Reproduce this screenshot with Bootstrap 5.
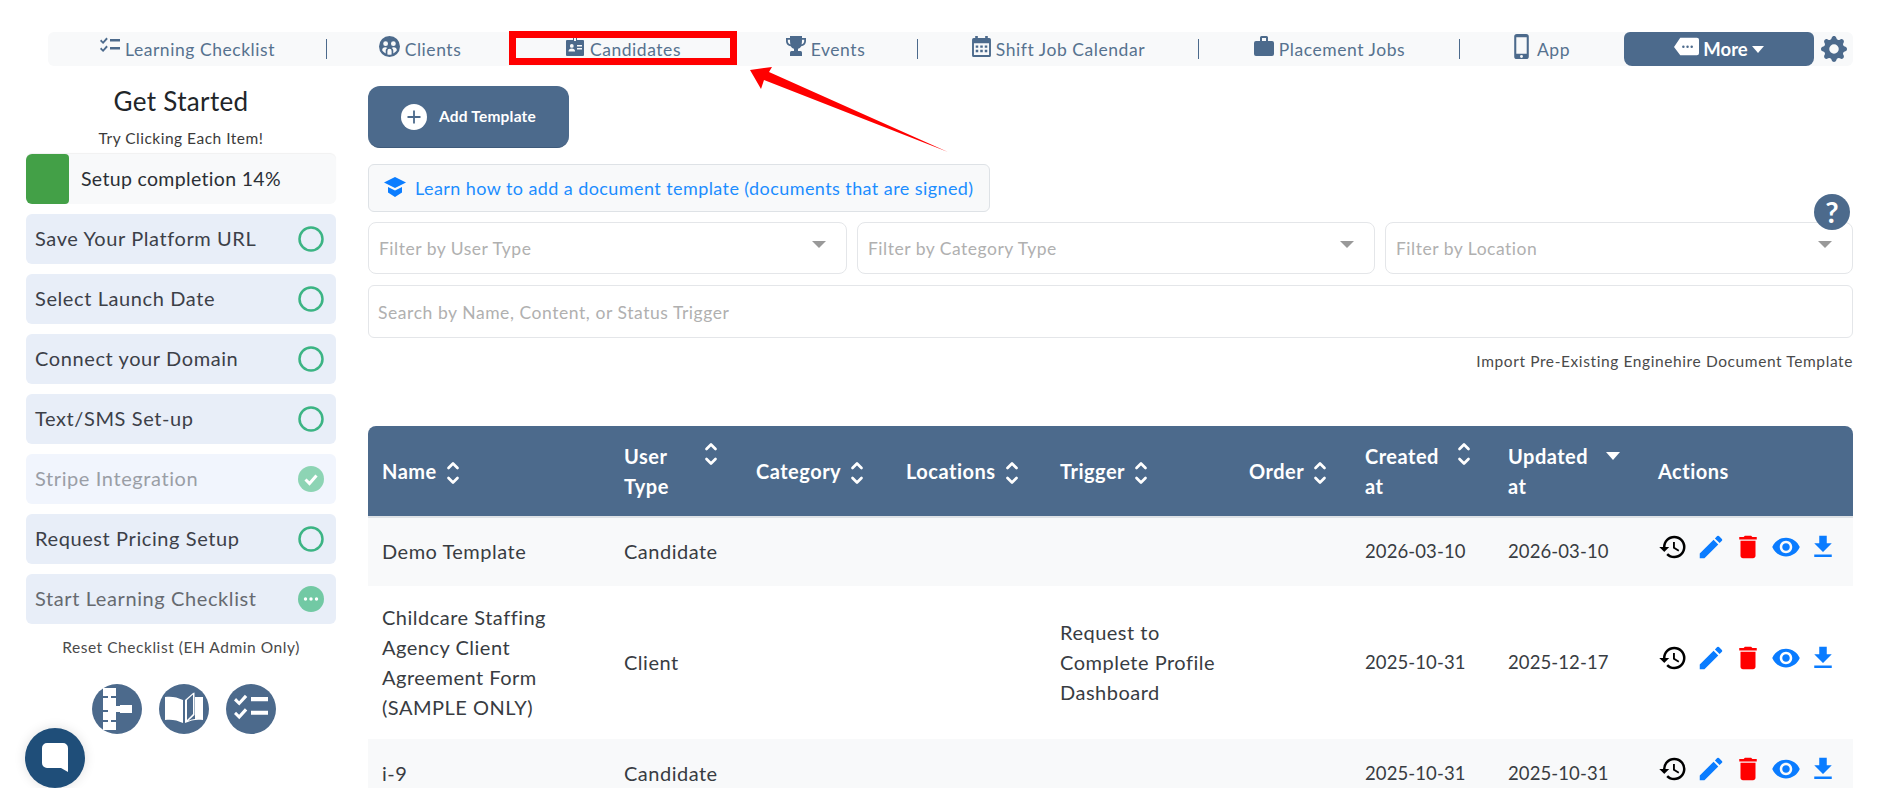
<!DOCTYPE html>
<html lang="en">
<head>
<meta charset="utf-8">
<title>Templates</title>
<link href="https://cdn.jsdelivr.net/npm/bootstrap@5.3.0/dist/css/bootstrap.min.css" rel="stylesheet">
<style>
html,body{height:788px;overflow:hidden;background:#fff}
body{font-family:"Lato","Noto Sans",sans-serif;color:#212529;position:relative;padding-top:32px}
.topnav{margin:0 46px 0 48px;height:34px;background:#f8f9fa;border-radius:6px}
.navcell{height:34px;color:#56728f;font-size:17.5px;letter-spacing:.55px;text-decoration:none;position:relative;white-space:nowrap;padding-top:2px}
.navcell svg{fill:#4c6a8c;margin-right:5px;transform:translateY(-4px)}
.sep::after{content:"";position:absolute;right:0;top:7px;height:20px;border-right:1.5px solid #4c6a8c}
.w1{width:279px}.w2{width:186px}.w3{width:220px}.w4{width:185px}.w5{width:281px}.w6{width:261px}.w7{width:164px}
.morebtn{width:190px;height:34px;background:#4c6a8c;color:#fff;border-radius:6px 6px 8px 8px;font-weight:700;font-size:18.5px;padding:1px 0 0;border:0}
.morebtn:hover{background:#4c6a8c;color:#fff}
.morebtn svg{fill:#fff}
.morebtn svg:first-child{transform:translateY(-3px)}
.gearwrap{width:39px}
.gearwrap svg{fill:#4c6a8c}
.layout{margin-top:20px;padding-left:26px}
.sidecol{width:310px;flex:none}
.sidetitle{font-size:26px;line-height:30px;font-weight:400;margin:0;text-align:center;letter-spacing:.35px}
.sidesub{font-size:15.5px;line-height:22px;margin:11px 0 5px;text-align:center;color:#3a3a3a;letter-spacing:.5px}
.progbox{height:50px;background:#f8f9fa;border-radius:6px;font-size:19.5px;box-shadow:0 -1px 1px rgba(0,0,0,.06);overflow:hidden;letter-spacing:.33px;color:#2b2f35}
.progfill{width:43px;height:50px;background:#43a047;border-radius:4px;margin-right:12px}
.stepitem{height:50px;margin-top:10px;background:#e8eef8;border-radius:6px;padding:0 12px 2px 9px;font-size:20px;color:#3c4048;letter-spacing:.6px}
.stepitem svg{transform:translateY(1px)}
.stepitem.faded{background:#f1f5fd;color:#9a9ea6}
.stepitem.mute{color:#666a70}
.resettext{font-size:15.5px;line-height:22px;text-align:center;margin:12px 0 0;color:#4a4a4a;letter-spacing:.55px}
.roundrow{margin-top:26px;gap:17px;padding-left:5px}
.roundicon{width:50px;height:50px;border-radius:50%;background:#4c6a8c}
.roundicon svg{fill:#fff}
.maincol{width:1485px;margin-left:32px;flex:none;position:relative}
.addbtn{width:201px;height:62px;background:#4c6a8c;color:#fff;border-radius:12px;font-weight:700;font-size:15.5px;padding:0;border:0;border-bottom:1px solid #3e5a7a;letter-spacing:.2px}
.addbtn:hover{background:#4c6a8c;color:#fff}
.addbtn svg{margin-right:12px}
.learnbox{width:622px;height:48px;margin-top:16px;background:#f8f9fa;border:1px solid #dee2e6;border-radius:6px;color:#1c8dff;font-size:18px;letter-spacing:.42px;text-decoration:none;padding:1px 0 0 15px}
.learnbox svg{fill:#0b7dff;margin-right:9px;transform:translateY(-2px)}
.filterrow{margin-top:10px;gap:10px}
.filterbox{height:52px;border:1px solid #e4e6e9;border-radius:8px;padding:2px 20px 0 10px;color:#b0b0b0;font-size:17.5px;letter-spacing:.5px}
.fa{width:479px}.fb{width:518px}.fc{width:468px}
.caretmark{width:0;height:0;border-left:7px solid transparent;border-right:7px solid transparent;border-top:7px solid #999;transform:translateY(-5px)}
.searchbox{display:block;width:100%;height:53px;margin-top:11px;border:1px solid #e4e6e9;border-radius:6px;padding:2px 9px 0;font-size:17.5px;letter-spacing:.56px;color:#333}
.searchbox::placeholder{color:#b0b0b0}
.importline{font-size:15.5px;line-height:22px;margin-top:12px;text-align:right;color:#4a4a4a;letter-spacing:.6px}
.helpdot{position:absolute;right:3px;top:108px;width:36px;height:36px;border-radius:50%;background:#4c6a8c;color:#fff;font-weight:700;font-size:29px;line-height:36px;text-align:center}
.tplt{margin-top:54px;table-layout:fixed;width:1485px;border-collapse:separate;border-spacing:0;font-size:20px;line-height:30px;letter-spacing:.5px;margin-bottom:0}
.tplt th{background:#4c6a8c;color:#fff;font-weight:700;height:92px;padding:0 0 0 14px;vertical-align:middle;border-bottom:2px solid #dee2e6;letter-spacing:.5px}
.tplt th:first-child{border-top-left-radius:8px}
.tplt th:last-child{border-top-right-radius:8px}
.tplt td{padding:0 0 2px 14px;vertical-align:middle;border:0;color:#383c42}
.tplt tr.ev td{background:#f8f9fa}
.tplt tr.od td{background:#fff}
.tplt td.datecell{font-size:18.5px;letter-spacing:.1px}
.r1{height:68px}.r2{height:153px}.r3{height:69px}
.sorter{fill:none;stroke:#fff;stroke-width:2.7;stroke-linecap:round;stroke-linejoin:round;margin-left:9px;vertical-align:-7px}
.sorter.gapuser{margin-right:24px}
.sorter.gapdate{margin-left:18px}
.sortcaret{margin:11px 0 0 18px}
.actset{gap:7.5px;padding-bottom:8px}
.redrect{position:absolute;left:509px;top:31px;width:228px;height:34px;border:7px solid #f00;pointer-events:none}
.arrowmark{position:absolute;left:740px;top:60px}
.chatbubble{position:absolute;left:25px;top:728px;width:60px;height:60px;border-radius:50%;background:#1f4e79;box-shadow:0 0 12px rgba(0,0,0,.12)}
</style>
</head>
<body>
<svg width="0" height="0" class="position-absolute">
<defs>
<symbol id="i-hist" viewBox="0 0 24 24"><path d="M13 3a9 9 0 0 0-9 9H1l3.89 3.89.07.14L9 12H6c0-3.87 3.13-7 7-7s7 3.13 7 7-3.13 7-7 7c-1.93 0-3.68-.79-4.94-2.06l-1.42 1.42A8.954 8.954 0 0 0 13 21a9 9 0 0 0 0-18zm-1 5v5l4.28 2.54.72-1.21-3.5-2.08V8H12z"/></symbol>
<symbol id="i-edit" viewBox="0 0 24 24"><path d="M3 17.25V21h3.75L17.81 9.94l-3.75-3.75L3 17.25zM20.71 7.04a1 1 0 0 0 0-1.41l-2.34-2.34a1 1 0 0 0-1.41 0l-1.83 1.83 3.75 3.75 1.83-1.83z"/></symbol>
<symbol id="i-del" viewBox="0 0 24 24"><path d="M6 19c0 1.1.9 2 2 2h8c1.1 0 2-.9 2-2V7H6v12zM19 4h-3.5l-1-1h-5l-1 1H5v2h14V4z"/></symbol>
<symbol id="i-eye" viewBox="0 0 24 24"><path d="M12 4.5C7 4.5 2.73 7.61 1 12c1.73 4.39 6 7.5 11 7.5s9.27-3.11 11-7.5c-1.73-4.39-6-7.5-11-7.5zM12 17c-2.76 0-5-2.24-5-5s2.24-5 5-5 5 2.24 5 5-2.24 5-5 5zm0-8c-1.66 0-3 1.34-3 3s1.34 3 3 3 3-1.34 3-3-1.34-3-3-3z"/></symbol>
<symbol id="i-down" viewBox="0 0 24 24"><path d="M19 9h-4V3H9v6H5l7 7 7-7zM5 18v2h14v-2H5z"/></symbol>
<symbol id="i-sort" viewBox="0 0 14 26"><path d="M2.500 8 7 3.500 11.500 8M2.500 18 7 22.500 11.500 18"/></symbol>
<symbol id="i-list" viewBox="0 0 20 20"><path d="M1.200 3.600 3 5.400 6.400 1.600 7.800 2.900 3.100 8 0 5zM1.200 11.600 3 13.400 6.400 9.600 7.800 10.900 3.100 16 0 13zM10 3h10v2.400H10zM10 11h10v2.400H10z"/></symbol>
</defs>
</svg>

<nav class="topnav d-flex align-items-center">
<a class="navcell w1 sep d-flex align-items-center justify-content-center" href="#"><svg width="20" height="20"><use href="#i-list"/></svg>Learning Checklist</a>
<a class="navcell w2 d-flex align-items-center justify-content-center" href="#"><svg width="21" height="21" viewBox="0 0 20 20"><path fill-rule="evenodd" d="M10 0a10 10 0 1 1 0 20 10 10 0 0 1 0-20zM6.300 5a2.300 2.300 0 1 0 0 4.600 2.300 2.300 0 0 0 0-4.600zm7.400 0a2.300 2.300 0 1 0 0 4.600 2.300 2.300 0 0 0 0-4.600zM6 10.800c-1.800 0-3 1.200-3 2.800.8 1.300 2 2.300 3.400 3V14c0-1 .6-2 1.600-2.500-.5-.5-1.200-.7-2-.7zm8 0c-.8 0-1.500.2-2 .7 1 .5 1.600 1.500 1.600 2.500v2.600c1.400-.7 2.600-1.700 3.400-3 0-1.600-1.200-2.800-3-2.800zm-4 1.400a2 2 0 0 0-2 2v3.400a9 9 0 0 0 4 0v-3.400a2 2 0 0 0-2-2z"/></svg>Clients</a>
<a class="navcell w3 d-flex align-items-center justify-content-center" href="#"><svg width="20" height="22" viewBox="0 0 20 20"><path fill-rule="evenodd" d="M8 0h4v4h6a1 1 0 0 1 1 1v14a1 1 0 0 1-1 1H2a1 1 0 0 1-1-1V5a1 1 0 0 1 1-1h6zm1 1v4h2V1zM6.800 8a1.900 1.900 0 1 0 0 3.800 1.900 1.900 0 0 0 0-3.800zM3.500 15.500h6.600c0-1.700-1.400-3-3.300-3s-3.300 1.300-3.300 3zM12 9v1.400h5V9zm0 3v1.400h5V12z"/></svg>Candidates</a>
<a class="navcell w4 sep d-flex align-items-center justify-content-center" href="#"><svg width="20" height="20" viewBox="0 0 20 20"><path fill-rule="evenodd" d="M4 0h12v2h4v3c0 3-2.300 5-4.800 5.300-.8 1.300-2 2.200-3.200 2.500V15h2.500c1 0 1.500.8 1.500 2v3H4v-3c0-1.200.5-2 1.500-2H8v-2.200c-1.200-.3-2.400-1.200-3.200-2.500C2.300 10 0 8 0 5V2h4zM1.800 3.800V5c0 1.800 1.200 3 2.600 3.500C4.100 7.200 4 5.500 4 3.800zm14.200 0c0 1.700-.1 3.400-.4 4.700C17 8 18.200 6.800 18.200 5V3.800z"/></svg>Events</a>
<a class="navcell w5 sep d-flex align-items-center justify-content-center" href="#"><svg width="19" height="21" viewBox="0 0 18 20"><path fill-rule="evenodd" d="M3 0h2.500v2h7V0H15v2h1.500A1.500 1.500 0 0 1 18 3.500v15a1.500 1.500 0 0 1-1.500 1.500h-15A1.500 1.500 0 0 1 0 18.500v-15A1.500 1.500 0 0 1 1.500 2H3zM1.800 7v11.200h14.400V7zM3.500 9h2.400v2.200H3.500zm4.300 0h2.400v2.200H7.800zm4.300 0h2.400v2.200h-2.400zM3.500 13.200h2.400v2.200H3.500zm4.300 0h2.400v2.200H7.800zm4.300 0h2.400v2.200h-2.400z"/></svg>Shift Job Calendar</a>
<a class="navcell w6 sep d-flex align-items-center justify-content-center" href="#"><svg width="20" height="20" viewBox="0 0 20 20"><path fill-rule="evenodd" d="M6 1.500A1.500 1.500 0 0 1 7.500 0h5A1.500 1.500 0 0 1 14 1.500V5h4a2 2 0 0 1 2 2v11a2 2 0 0 1-2 2H2a2 2 0 0 1-2-2V7a2 2 0 0 1 2-2h4zM8 2v3h4V2z"/></svg>Placement Jobs</a>
<a class="navcell w7 d-flex align-items-center justify-content-center" href="#"><svg width="15" height="25" viewBox="0 0 14 24" class="me-2"><path fill-rule="evenodd" d="M2.500 0h9A2.500 2.500 0 0 1 14 2.500v19a2.500 2.500 0 0 1-2.500 2.500h-9A2.500 2.500 0 0 1 0 21.500v-19A2.500 2.500 0 0 1 2.500 0zM2 3v16h10V3zm5 17.200a1.400 1.400 0 1 0 0 2.800 1.400 1.400 0 0 0 0-2.800z"/></svg>App</a>
<button type="button" class="btn morebtn d-flex align-items-center justify-content-center"><svg width="25" height="22" viewBox="0 0 24 20" class="me-1"><path fill-rule="evenodd" d="M6 1h16a2 2 0 0 1 2 2v13a2 2 0 0 1-2 2H6l-6-8zM9 8.600a1.200 1.200 0 1 0 0 2.400 1.200 1.200 0 0 0 0-2.400zm4 0a1.200 1.200 0 1 0 0 2.400 1.200 1.200 0 0 0 0-2.400zm4 0a1.200 1.200 0 1 0 0 2.400 1.200 1.200 0 0 0 0-2.400z"/></svg>More<svg width="12" height="7" viewBox="0 0 12 7" class="ms-1"><path d="M0 0h12L6 7z"/></svg></button>
<div class="gearwrap d-flex justify-content-center"><svg width="26" height="26" viewBox="0 0 16 16"><path d="M9.405 1.050c-.413-1.400-2.397-1.400-2.810 0l-.1.340a1.464 1.464 0 0 1-2.105.872l-.31-.17c-1.283-.698-2.686.705-1.987 1.987l.169.311c.446.820.023 1.841-.872 2.105l-.34.1c-1.400.413-1.400 2.397 0 2.810l.34.1a1.464 1.464 0 0 1 .872 2.105l-.17.31c-.698 1.283.705 2.686 1.987 1.987l.311-.169a1.464 1.464 0 0 1 2.105.872l.1.340c.413 1.400 2.397 1.400 2.810 0l.1-.340a1.464 1.464 0 0 1 2.105-.872l.31.170c1.283.698 2.686-.705 1.987-1.987l-.169-.311a1.464 1.464 0 0 1 .872-2.105l.340-.1c1.400-.413 1.400-2.397 0-2.810l-.340-.1a1.464 1.464 0 0 1-.872-2.105l.170-.31c.698-1.283-.705-2.686-1.987-1.987l-.311.169a1.464 1.464 0 0 1-2.105-.872l-.1-.34zM8 10.930a2.929 2.929 0 1 1 0-5.860 2.929 2.929 0 0 1 0 5.858z"/></svg></div>
</nav>

<div class="layout d-flex align-items-start">
<aside class="sidecol">
<h1 class="sidetitle">Get Started</h1>
<p class="sidesub">Try Clicking Each Item!</p>
<div class="progbox d-flex align-items-center"><div class="progfill"></div>Setup completion 14%</div>
<div class="stepitem d-flex align-items-center justify-content-between">Save Your Platform URL<svg width="26" height="26" viewBox="0 0 26 26"><circle cx="13" cy="13" r="11.500" fill="none" stroke="#3cb484" stroke-width="2.500"/></svg></div>
<div class="stepitem d-flex align-items-center justify-content-between">Select Launch Date<svg width="26" height="26" viewBox="0 0 26 26"><circle cx="13" cy="13" r="11.500" fill="none" stroke="#3cb484" stroke-width="2.500"/></svg></div>
<div class="stepitem d-flex align-items-center justify-content-between">Connect your Domain<svg width="26" height="26" viewBox="0 0 26 26"><circle cx="13" cy="13" r="11.500" fill="none" stroke="#3cb484" stroke-width="2.500"/></svg></div>
<div class="stepitem d-flex align-items-center justify-content-between">Text/SMS Set-up<svg width="26" height="26" viewBox="0 0 26 26"><circle cx="13" cy="13" r="11.500" fill="none" stroke="#3cb484" stroke-width="2.500"/></svg></div>
<div class="stepitem faded d-flex align-items-center justify-content-between">Stripe Integration<svg width="26" height="26" viewBox="0 0 26 26"><circle cx="13" cy="13" r="13" fill="#8dd4b4"/><path d="M7.500 13.500 11.500 17.500 18.500 9.500" fill="none" stroke="#fff" stroke-width="3"/></svg></div>
<div class="stepitem d-flex align-items-center justify-content-between">Request Pricing Setup<svg width="26" height="26" viewBox="0 0 26 26"><circle cx="13" cy="13" r="11.500" fill="none" stroke="#3cb484" stroke-width="2.500"/></svg></div>
<div class="stepitem mute d-flex align-items-center justify-content-between">Start Learning Checklist<svg width="26" height="26" viewBox="0 0 26 26"><circle cx="13" cy="13" r="13" fill="#72c9a4"/><circle cx="7.500" cy="13" r="1.700" fill="#fff"/><circle cx="13" cy="13" r="1.700" fill="#fff"/><circle cx="18.500" cy="13" r="1.700" fill="#fff"/></svg></div>
<p class="resettext">Reset Checklist (EH Admin Only)</p>
<div class="roundrow d-flex justify-content-center">
<div class="roundicon d-flex align-items-center justify-content-center"><svg width="30" height="42" viewBox="0 0 30 42"><path d="M0 0h13v8H8v2h5v8h4v-1h12v8H17v-1h-4v8H8v2h5v8H0v-8h5v-2H0v-8h5v-2H0V10h5V8H0z" transform="translate(1 0)"/></svg></div>
<div class="roundicon d-flex align-items-center justify-content-center"><svg width="38" height="38" viewBox="0 0 38 38"><path d="M0 7c6-1 12 0 18 3v23c-6-3-12-4-18-3zM20 10l8-7v1.500L22 10v20l6-6V3l1.500-.5V25L22 32l-2 1zM30 7l8 0v23c-6-1-12 0-18 3l1-1c3-2 7-3 9-3z"/></svg></div>
<div class="roundicon d-flex align-items-center justify-content-center"><svg width="34" height="34" viewBox="0 0 20 20"><use href="#i-list"/></svg></div>
</div>
</aside>

<main class="maincol">
<button type="button" class="btn addbtn d-flex align-items-center justify-content-center"><svg width="26" height="26" viewBox="0 0 26 26"><circle cx="13" cy="13" r="13" fill="#fff"/><path d="M13 6.500v13M6.500 13h13" stroke="#4c6a8c" stroke-width="1.800" fill="none"/></svg>Add Template</button>
<a href="#" class="learnbox d-flex align-items-center"><svg width="22" height="20" viewBox="0 0 22 20"><path fill-rule="evenodd" d="M11 0 22 5.500 11 11 0 5.500z"/><path d="M4 10l7 3.500 7-3.500v5.500L11 20l-7-4.500z"/></svg>Learn how to add a document template (documents that are signed)</a>
<div class="filterrow d-flex">
<div class="filterbox fa d-flex align-items-center justify-content-between">Filter by User Type<span class="caretmark"></span></div>
<div class="filterbox fb d-flex align-items-center justify-content-between">Filter by Category Type<span class="caretmark"></span></div>
<div class="filterbox fc d-flex align-items-center justify-content-between">Filter by Location<span class="caretmark"></span></div>
</div>
<input class="searchbox" type="text" placeholder="Search by Name, Content, or Status Trigger">
<div class="importline">Import Pre-Existing Enginehire Document Template</div>
<div class="helpdot">?</div>
<table class="table tplt">
<colgroup><col style="width:242px"><col style="width:132px"><col style="width:150px"><col style="width:154px"><col style="width:189px"><col style="width:116px"><col style="width:143px"><col style="width:150px"><col style="width:209px"></colgroup>
<thead><tr>
<th>Name<svg class="sorter" width="14" height="26"><use href="#i-sort"/></svg></th>
<th><div class="d-flex align-items-start"><span>User<br>Type</span><svg class="sorter gapuser ms-auto" width="14" height="26"><use href="#i-sort"/></svg></div></th>
<th>Category<svg class="sorter" width="14" height="26"><use href="#i-sort"/></svg></th>
<th>Locations<svg class="sorter" width="14" height="26"><use href="#i-sort"/></svg></th>
<th>Trigger<svg class="sorter" width="14" height="26"><use href="#i-sort"/></svg></th>
<th>Order<svg class="sorter" width="14" height="26"><use href="#i-sort"/></svg></th>
<th><div class="d-flex align-items-start"><span>Created<br>at</span><svg class="sorter gapdate" width="14" height="26"><use href="#i-sort"/></svg></div></th>
<th><div class="d-flex align-items-start"><span>Updated<br>at</span><svg class="sortcaret" width="14" height="8" viewBox="0 0 14 8" fill="#fff"><path d="M0 0h14L7 8z"/></svg></div></th>
<th>Actions</th>
</tr></thead>
<tbody>
<tr class="ev r1"><td>Demo Template</td><td>Candidate</td><td></td><td></td><td></td><td></td><td class="datecell">2026-03-10</td><td class="datecell">2026-03-10</td>
<td><div class="actset d-flex"><svg width="30" height="30" fill="#000"><use href="#i-hist"/></svg><svg width="30" height="30" fill="#0a7cff"><use href="#i-edit"/></svg><svg width="30" height="30" fill="#f00"><use href="#i-del"/></svg><svg width="30" height="30" fill="#0a7cff"><use href="#i-eye"/></svg><svg width="30" height="30" fill="#0a7cff"><use href="#i-down"/></svg></div></td></tr>
<tr class="od r2"><td>Childcare Staffing<br>Agency Client<br>Agreement Form<br>(SAMPLE ONLY)</td><td>Client</td><td></td><td></td><td>Request to<br>Complete Profile<br>Dashboard</td><td></td><td class="datecell">2025-10-31</td><td class="datecell">2025-12-17</td>
<td><div class="actset d-flex"><svg width="30" height="30" fill="#000"><use href="#i-hist"/></svg><svg width="30" height="30" fill="#0a7cff"><use href="#i-edit"/></svg><svg width="30" height="30" fill="#f00"><use href="#i-del"/></svg><svg width="30" height="30" fill="#0a7cff"><use href="#i-eye"/></svg><svg width="30" height="30" fill="#0a7cff"><use href="#i-down"/></svg></div></td></tr>
<tr class="ev r3"><td>i-9</td><td>Candidate</td><td></td><td></td><td></td><td></td><td class="datecell">2025-10-31</td><td class="datecell">2025-10-31</td>
<td><div class="actset d-flex"><svg width="30" height="30" fill="#000"><use href="#i-hist"/></svg><svg width="30" height="30" fill="#0a7cff"><use href="#i-edit"/></svg><svg width="30" height="30" fill="#f00"><use href="#i-del"/></svg><svg width="30" height="30" fill="#0a7cff"><use href="#i-eye"/></svg><svg width="30" height="30" fill="#0a7cff"><use href="#i-down"/></svg></div></td></tr>
</tbody>
</table>
</main>
</div>

<div class="redrect"></div>
<svg class="arrowmark" width="215" height="100" viewBox="740 60 215 100"><polygon points="750,70 772,67 769,72 948,152 764,80 761,89" fill="#f00"/></svg>
<div class="chatbubble d-flex align-items-center justify-content-center"><svg width="26" height="30" viewBox="0 0 26 30"><path d="M5 0h16a5 5 0 0 1 5 5v24l-7-4H5a5 5 0 0 1-5-5V5a5 5 0 0 1 5-5z" fill="#fff"/></svg></div>
<script src="https://cdn.jsdelivr.net/npm/bootstrap@5.3.0/dist/js/bootstrap.bundle.min.js"></script>
</body>
</html>
